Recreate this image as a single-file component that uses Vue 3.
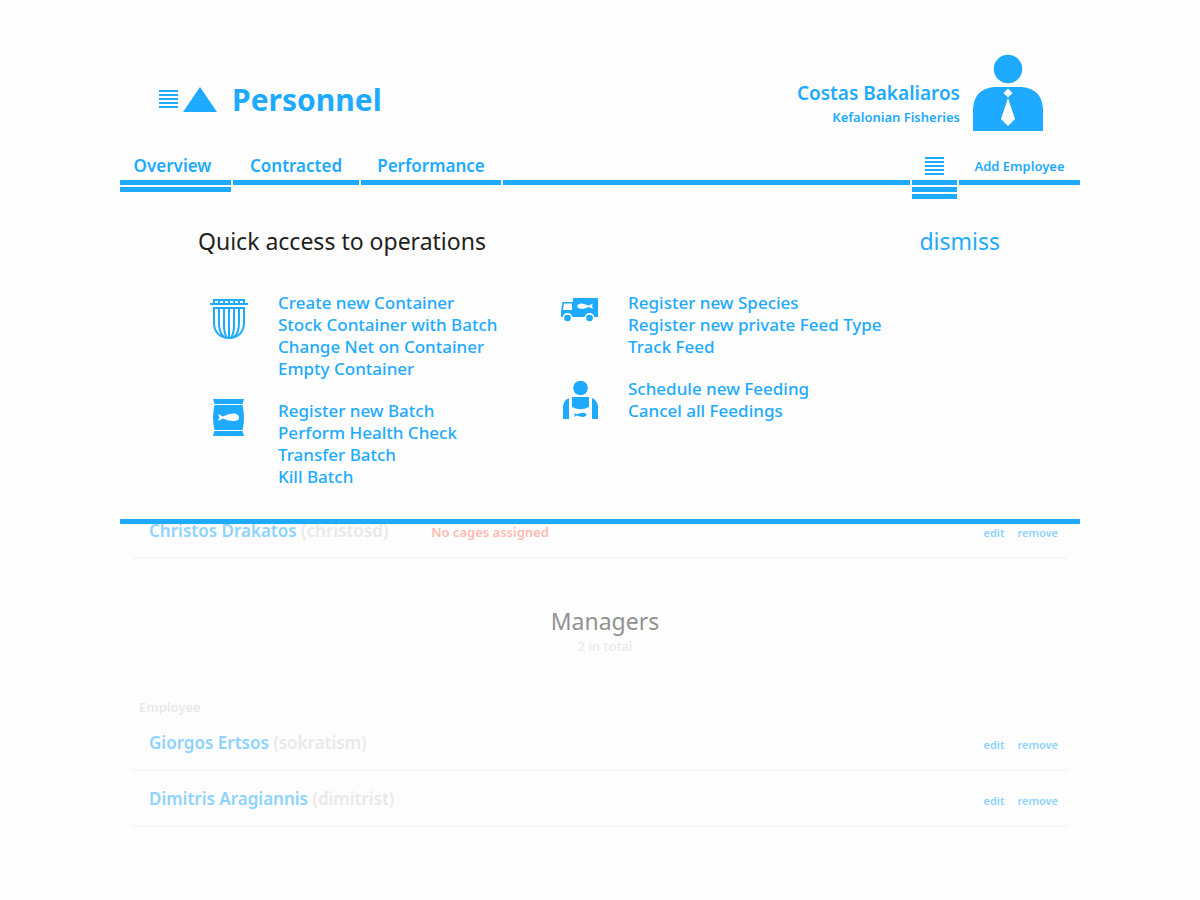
<script setup>
const tabs = [
  { label: 'Overview', active: true },
  { label: 'Contracted', active: false },
  { label: 'Performance', active: false },
]

const columns = [
  [
    {
      icon: 'container',
      links: ['Create new Container', 'Stock Container with Batch', 'Change Net on Container', 'Empty Container'],
    },
    { icon: 'batch', links: ['Register new Batch', 'Perform Health Check', 'Transfer Batch', 'Kill Batch'] },
  ],
  [
    { icon: 'truck', links: ['Register new Species', 'Register new private Feed Type', 'Track Feed'] },
    { icon: 'feeder', links: ['Schedule new Feeding', 'Cancel all Feedings'] },
  ],
]

const managers = [
  { name: 'Giorgos Ertsos', login: 'sokratism' },
  { name: 'Dimitris Aragiannis', login: 'dimitrist' },
]
</script>

<template>
  <div class="page">
    <header class="header">
      <a class="brand" href="#">
        <svg class="brand-mark" viewBox="0 0 58 26" aria-hidden="true">
          <path d="M0 3h19v2H0zM0 7h19v2H0zM0 11h19v2H0zM0 15h19v2H0zM0 19h19v2H0z" />
          <path d="M41 0L58 25H24z" />
        </svg>
        <h1>Personnel</h1>
      </a>
      <div class="user">
        <div class="user-text">
          <a class="user-name" href="#">Costas Bakaliaros</a>
          <a class="user-org" href="#">Kefalonian Fisheries</a>
        </div>
        <svg class="avatar" viewBox="0 0 70 76" aria-hidden="true">
          <circle cx="35" cy="14" r="14.3" />
          <path d="M0 76V54Q1 34 21 32H49Q69 34 70 54V76z" />
          <path class="cut" d="M35 33.5l4.5 4.5-4.5 4.5-4.500-4.500zM35 43l7 21-7 7-7-7z" />
        </svg>
      </div>
    </header>

    <nav class="tabs">
      <a v-for="tab in tabs" :key="tab.label" class="tab" :class="{ active: tab.active }" href="#">{{ tab.label }}</a>
      <span class="tab filler"></span>
      <button class="tab menu" type="button" aria-label="Operations">
        <svg viewBox="0 0 19 18" aria-hidden="true">
          <path d="M0 0h19v2H0zM0 4h19v2H0zM0 8h19v2H0zM0 12h19v2H0zM0 16h19v2H0z" />
        </svg>
      </button>
      <button class="tab add" type="button">Add Employee</button>
    </nav>

    <section class="panel">
      <div class="panel-head">
        <h2>Quick access to operations</h2>
        <button class="dismiss" type="button">dismiss</button>
      </div>
      <div class="columns">
        <div v-for="(column, i) in columns" :key="i" class="column">
          <div v-for="group in column" :key="group.icon" class="group">
            <svg v-if="group.icon === 'container'" class="icon" viewBox="0 0 60 50" aria-hidden="true">
              <path d="M13 5h32v5H13zM15 7v2h3V7zM20 7v2h3V7zM25 7v2h3V7zM30 7v2h3V7zM35 7v2h3V7zM40 7v2h3V7z" fill-rule="evenodd" />
              <path d="M10 9h38v2H10z" />
              <path
                class="line"
                d="M14 14H44V29C44 38 38 44 29 44S14 38 14 29zM19 14V29Q19 39 24 43M24 14V32Q24 39 27 44M29 14V44M34 14V32Q34 39 31 44M39 14V29Q39 39 34 43"
              />
            </svg>
            <svg v-else-if="group.icon === 'batch'" class="icon" viewBox="0 0 60 50" aria-hidden="true">
              <path d="M13 -3H44L42.500 2H14.500zM14.500 3H42.500Q45.500 16 42.500 28H14.500Q11.500 16 14.500 3zM14.500 29H42.500L44 34H13z" />
              <path class="cut" d="M18 12L23 14.500Q29 11 35 11.500Q39 12.500 39 15.500Q39 18.500 35 19Q29 19.500 23 16.500L18 19L19.500 15.500z" />
            </svg>
            <svg v-else-if="group.icon === 'truck'" class="icon" viewBox="0 0 60 50" aria-hidden="true">
              <path d="M23 4H48V23H11V17L12.500 8H23z" />
              <path class="cut" d="M14 9.500H22V16H13zM27 12Q28 9 32 9.500L39 11.500L43 9.500L42 12L43 15L39 13L33 15Q28 15 27 12z" />
              <circle class="cut" cx="17.500" cy="24" r="5" />
              <circle class="cut" cx="39.500" cy="24" r="5" />
              <circle cx="17.500" cy="24" r="3.300" />
              <circle cx="39.500" cy="24" r="3.300" />
            </svg>
            <svg v-else class="icon" viewBox="0 0 60 50" aria-hidden="true">
              <circle cx="30.500" cy="8" r="7.300" />
              <path d="M22 17H39V27Q30.500 31.500 22 27zM19 18V39H13V26Q14 20 19 18zM42 18V39H48V26Q47 20 42 18z" />
              <path d="M24 33l3 1.300Q31 32 35 33Q36.500 34 36.500 35Q36 36.500 33 37Q30 36.500 27 35.500L24 37L25 35z" />
            </svg>
            <ul>
              <li v-for="link in group.links" :key="link"><a href="#">{{ link }}</a></li>
            </ul>
          </div>
        </div>
      </div>
    </section>

    <main class="content">
      <table>
        <tbody>
          <tr>
            <td class="name"><a href="#">Christos Drakatos</a> (christosd)</td>
            <td class="note">No cages assigned</td>
            <td class="actions"><a href="#">edit</a><a href="#">remove</a></td>
          </tr>
        </tbody>
      </table>

      <div class="section-title">
        <h2>Managers</h2>
        <p>2 in total</p>
      </div>

      <table>
        <thead>
          <tr>
            <th colspan="3" scope="col">Employee</th>
          </tr>
        </thead>
        <tbody>
          <tr v-for="person in managers" :key="person.login">
            <td class="name"><a href="#">{{ person.name }}</a> ({{ person.login }})</td>
            <td class="note"></td>
            <td class="actions"><a href="#">edit</a><a href="#">remove</a></td>
          </tr>
        </tbody>
      </table>
    </main>
  </div>
</template>

<style>
body {
  background: #fdfdfd;
}
</style>

<style scoped>
.page {
  max-width: 960px;
  margin: 0 auto;
  color: #1eabff;
  font-family: "Noto Sans", "Open Sans", sans-serif;
}
h1, h2, p, ul {
  margin: 0;
  padding: 0;
  font-weight: 400;
}
a {
  color: inherit;
  text-decoration: none;
}
button {
  border: 0;
  padding: 0;
  background: none;
  color: inherit;
  font: inherit;
  cursor: pointer;
}
svg {
  display: block;
  fill: #1eabff;
}
.cut {
  fill: #fdfdfd;
}
.line {
  fill: none;
  stroke: #1eabff;
  stroke-width: 2;
}
.header {
  display: flex;
  justify-content: space-between;
  padding: 55px 37px 0 39px;
}
.brand {
  display: flex;
  align-items: center;
  gap: 15px;
  height: 76px;
  padding-top: 14px;
  box-sizing: border-box;
}
.brand-mark {
  width: 58px;
  height: 26px;
}
h1 {
  font-size: 30px;
  line-height: 40px;
  font-weight: 700;
}
.user {
  display: flex;
  gap: 13px;
}
.user-text {
  display: flex;
  flex-direction: column;
  align-items: flex-end;
  padding-top: 25px;
  font-weight: 600;
}
.user-name {
  font-size: 19px;
  line-height: 27px;
}
.user-org {
  font-size: 13px;
  line-height: 20px;
}
.avatar {
  width: 70px;
  height: 76px;
  overflow: visible;
}
.tabs {
  display: grid;
  grid-template-columns: 111px 126px 140px 1fr 45px 121px;
  gap: 2px;
  height: 68px;
  padding-top: 19px;
  align-items: start;
  box-sizing: border-box;
}
.tab {
  height: 35px;
  box-sizing: border-box;
  border-bottom: 5px solid #1eabff;
  font-size: 17px;
  line-height: 32px;
  font-weight: 600;
  text-align: center;
  position: relative;
}
.tab.active {
  padding-right: 6px;
}
.tab.active::after,
.tab.menu::after {
  content: "";
  position: absolute;
  left: 0;
  right: 0;
  top: 37px;
  height: 5px;
  background: #1eabff;
}
.tab.menu::after {
  height: 2px;
  background: none;
  border-top: 5px solid #1eabff;
  border-bottom: 5px solid #1eabff;
}
.tab.menu,
.tab.add {
  padding-top: 2px;
  line-height: 20px;
}
.tab.menu svg {
  width: 19px;
  height: 18px;
  margin: 0 auto;
}
.tab.add {
  font-size: 13px;
}
.panel {
  position: relative;
  z-index: 1;
  padding: 22px 80px 31px 78px;
  border-bottom: 5px solid #1eabff;
  background: #fdfdfd;
}
.panel-head {
  display: flex;
  justify-content: space-between;
  font-size: 23px;
  line-height: 40px;
}
.panel-head h2 {
  color: #231f20;
  font-size: 23px;
}
.columns {
  display: grid;
  grid-template-columns: 350px 1fr;
  margin-top: 31px;
}
.column {
  display: flex;
  flex-direction: column;
  gap: 20px;
}
.group {
  display: flex;
  gap: 18px;
}
.icon {
  width: 60px;
  height: 50px;
  margin: 2px 0 0 2px;
  overflow: visible;
}
ul {
  list-style: none;
  font-size: 17px;
  line-height: 22px;
  font-weight: 500;
}
.content {
  margin-top: -21px;
  padding: 0 11px;
}
table {
  width: 100%;
  border-collapse: separate;
  border-spacing: 0;
  table-layout: fixed;
}
td {
  height: 56px;
  padding: 2px 0 0;
  box-sizing: border-box;
  border-bottom: 2px solid #f6f6f6;
  line-height: 24px;
}
td:first-child {
  border-bottom-left-radius: 4px;
}
td:last-child {
  border-bottom-right-radius: 4px;
}
th {
  height: 16px;
  padding: 5px 8px 0;
  color: #e9e9e9;
  font-size: 13px;
  font-weight: 600;
  line-height: 16px;
  text-align: left;
}
.name {
  width: 32%;
  padding-left: 18px;
  color: #e9e9e9;
  font-size: 17px;
  font-weight: 600;
}
.name a {
  color: #8dd3ff;
}
.note {
  padding-top: 4px;
  color: #ffb9b3;
  font-size: 13px;
  font-weight: 600;
}
.actions {
  padding: 5px 11px 0 0;
  color: #8dd3ff;
  font-size: 11px;
  font-weight: 600;
  text-align: right;
}
.actions a + a {
  margin-left: 13px;
}
.section-title {
  padding: 44px 0 41px 10px;
  text-align: center;
}
.section-title h2 {
  color: #929292;
  font-size: 23px;
  line-height: 36px;
}
.section-title p {
  color: #eaeaea;
  font-size: 13px;
  font-weight: 500;
  line-height: 14px;
}
</style>
